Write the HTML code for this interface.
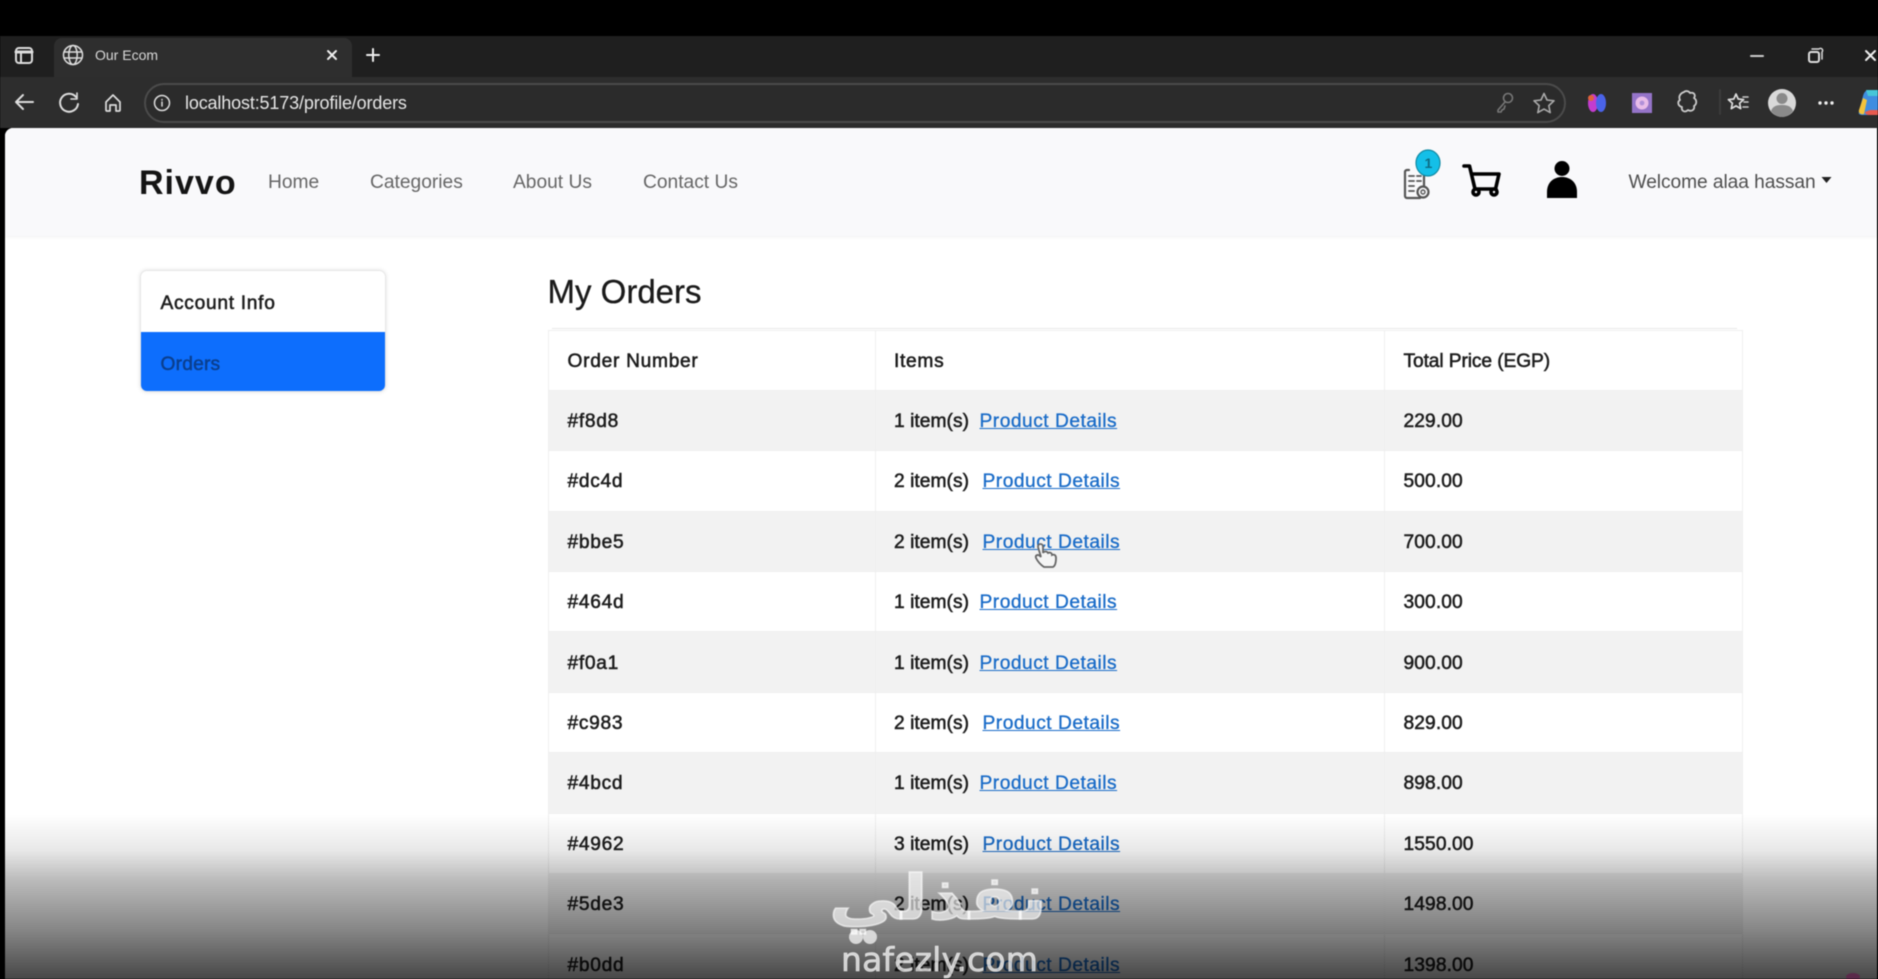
<!DOCTYPE html>
<html lang="en"><head><meta charset="utf-8"><title>Our Ecom</title>
<style>
*{box-sizing:border-box;margin:0;padding:0}
html,body{width:1878px;height:979px;overflow:hidden;background:#000;font-family:"Liberation Sans",sans-serif}
#root{position:absolute;left:0;top:0;width:1878px;height:979px;overflow:hidden;filter:blur(.45px)}
.a{position:absolute;white-space:nowrap}
.ts{top:36px;left:0;width:1878px;height:41px;background:#1f1f1f}
.tab{left:54px;top:38px;width:298px;height:39px;background:#2e2e2e;border-radius:8px 8px 0 0}
.tb{left:0;top:77px;width:1878px;height:51px;background:#2d2d2d}
.addr{left:144px;top:83px;width:1422px;height:40px;border:2px solid #4b4b4b;border-radius:20px;background:#2b2b2b}
.page{left:5px;top:128px;width:1872px;height:851px;background:#fff;border-radius:8px 0 0 0;overflow:hidden}
.nav{left:5px;top:128px;width:1872px;height:108px;background:#f9f9fb;border-radius:8px 0 0 0;box-shadow:0 1px 3px rgba(0,0,0,.06)}
.t{font-size:19.2px;line-height:24px;letter-spacing:.7px;color:#1d1d1d;-webkit-text-stroke:.55px #1d1d1d}
.nl{font-size:19.2px;line-height:24px;color:#666;top:171px}
.side{left:140px;top:270px;width:246px;height:122px;border-radius:7px;border:1px solid #e8e8e8;box-shadow:0 0 4px rgba(0,0,0,.12);background:#fff;overflow:hidden}
.side div{position:absolute;left:0;top:61px;width:246px;height:61px;background:#0d6efd}
table{position:absolute;left:548px;top:329.5px;width:1194px;border-collapse:collapse;table-layout:fixed}
td,th{height:60.4px;padding:3px 0 0 18.5px;text-align:left;font-size:19.2px;font-weight:400;letter-spacing:.7px;color:#1d1d1d;-webkit-text-stroke:.55px #1d1d1d;border:1px solid #efefef;white-space:nowrap;overflow:hidden}
tbody tr:nth-child(odd) td{background:#f2f2f2}
td a{color:#1a6cc8;-webkit-text-stroke:.35px #1a6cc8;text-decoration:underline;letter-spacing:.5px}
td span{display:inline-block;letter-spacing:.05px}
.s1{width:85.5px}.s2{width:88.5px}
.p{letter-spacing:.1px}
th.p{letter-spacing:-.1px}
.grad{left:0;top:800px;width:1878px;height:179px;background:linear-gradient(to bottom,rgba(0,0,0,0) 0,rgba(0,0,0,0) 8%,rgba(0,0,0,.09) 28%,rgba(0,0,0,.27) 45%,rgba(0,0,0,.47) 72%,rgba(0,0,0,.72) 100%)}
svg{position:absolute;overflow:visible}
</style></head><body><div id="root">
<div class="a ts"></div>
<div class="a tab"></div>
<div class="a tb"></div>
<div class="a addr"></div>

<svg style="left:0;top:0" width="1878" height="128" fill="none" stroke="#ddd" stroke-width="2" stroke-linecap="round" stroke-linejoin="round">
<rect x="16" y="48" width="16" height="15" rx="3"/><path d="M16 52h16" stroke-width="3"/><path d="M21 52v11"/>
<circle cx="73" cy="55" r="9.5" stroke-width="1.5"/><ellipse cx="73" cy="55" rx="4.2" ry="9.5" stroke-width="1.5"/><path d="M64 52h18M64 58h18" stroke-width="1.5"/>
<path d="M328 51l8 8M336 51l-8 8" stroke="#eee"/>
<path d="M373 49v12M367 55h12" stroke="#eee"/>
<path d="M1751 56h12" stroke="#ccc"/>
<rect x="1809" y="52" width="10" height="10" rx="2"/><path d="M1812 49h7a2 2 0 0 1 3 3v7" stroke-width="1.5"/>
<path d="M1866 51l9 9M1875 51l-9 9" stroke="#eee"/>
<path d="M33 102H16M23 95l-7 7 7 7"/>
<path d="M76 97a9 9 0 1 0 2 7"/><path d="M77 93v6h-6" stroke-width="1.6"/>
<path d="M106 102l7-7 7 7v8a1 1 0 0 1-1 1h-3v-6h-6v6h-3a1 1 0 0 1-1-1z" stroke-width="1.7"/>
<circle cx="162" cy="103" r="7.5" stroke-width="1.5"/><path d="M162 102v4M162 99.5v.4" stroke-width="1.5"/>
<g stroke="#777" stroke-width="1.6"><circle cx="1508" cy="98" r="4.5"/><path d="M1505 102l-7 8v2h3l1-2 2-1 1-3"/></g>
<path d="M1544 93.500l3 6.500 7 .8-5.200 4.800 1.400 7-6.200-3.500-6.200 3.500 1.400-7-5.200-4.800 7-.8z" stroke="#aaa" stroke-width="1.6"/>
<path d="M1684 92a4 4 0 0 1 6 1c4-1 6 2 4 5 3 2 3 6 0 8 1 4-3 6-6 4-3 3-7 1-6-3-4-1-5-5-2-7-2-4 1-7 4-8z" stroke="#ccc" stroke-width="1.8"/>
<path d="M1736 94l2.200 5 5.400.6-4 3.600 1.100 5.400-4.700-2.700-4.700 2.700 1.100-5.400-4-3.600 5.400-.6z" stroke="#ddd" stroke-width="1.7"/><path d="M1743 97h5M1744 102h4M1743 107h5" stroke="#ccc" stroke-width="1.6"/>
<path d="M1720 90v24" stroke="#3b3b3b"/>
<g stroke="none">
<ellipse cx="1593" cy="103" rx="5" ry="9" fill="#c33ccf"/><ellipse cx="1601" cy="103" rx="5" ry="9" fill="#4a63e8"/><circle cx="1591" cy="98" r="3" fill="#e0623c"/>
<rect x="1632" y="93" width="20" height="20" fill="#9574c8"/><circle cx="1642" cy="103" r="6.500" fill="#e8bce8"/><circle cx="1642" cy="103" r="2.400" fill="#b090d8"/>
<circle cx="1782" cy="103" r="14" fill="#d9d9d9"/><circle cx="1782" cy="98.500" r="5.500" fill="#8a8a8a"/><path d="M1771 111c2-5 6-6 11-6s9 1 11 6c-3 4-7 6-11 6s-8-2-11-6z" fill="#8a8a8a"/>
<circle cx="1820" cy="103" r="1.700" fill="#eee"/><circle cx="1826" cy="103" r="1.700" fill="#eee"/><circle cx="1832" cy="103" r="1.700" fill="#eee"/>
<path d="M1859 112l4-16c1-4 3-6 6-6h9v18c0 4-3 7-6 7h-9c-3 0-5-1-4-3z" fill="#3f8de0"/><path d="M1859 110l4-12 4 2-3 14c-3 1-6-1-5-4z" fill="#f3c33c"/><path d="M1870 110h8v5h-8c-3 0-5-1-5-3z" fill="#e85a4f"/><path d="M1866 90h12v6h-10z" fill="#46c6d8"/>
</g>
</svg>

<div class="a" style="left:95px;top:46px;font-size:14px;line-height:18px;color:#d8d8d8">Our Ecom</div>
<div class="a" style="left:185px;top:92px;font-size:18px;line-height:22px;letter-spacing:-.15px;color:#e6e6e6">localhost:5173/profile/orders</div>

<div class="a page"></div>
<div class="a nav"></div>
<div class="a" style="left:139px;top:163px;font-size:34px;line-height:40px;font-weight:700;letter-spacing:1px;color:#141414">Rivvo</div>
<div class="a nl" style="left:268px">Home</div>
<div class="a nl" style="left:370px">Categories</div>
<div class="a nl" style="left:513px">About Us</div>
<div class="a nl" style="left:643px">Contact Us</div>
<div class="a" style="left:1628.500px;top:171px;font-size:19.200px;line-height:24px;letter-spacing:-.07px;color:#4e4e4e">Welcome alaa hassan</div>

<svg style="left:0;top:0" width="1878" height="240" fill="none" stroke-linecap="round" stroke-linejoin="round">
<path d="M1821.500 177h10l-5 6z" fill="#222"/>
<g stroke="#555" stroke-width="2.200">
<path d="M1409 170h-2a2 2 0 0 0-2 2v24a2 2 0 0 0 2 2h13"/><path d="M1424 172v14"/>
<path d="M1409 176h5M1409 181h5M1409 186h5M1409 191h5M1417 176h4M1417 181h4" stroke-width="1.800"/>
<circle cx="1423" cy="192" r="5.500"/><circle cx="1423" cy="192" r="2" stroke-width="1.400"/>
</g>
<ellipse cx="1428" cy="163" rx="12" ry="13" fill="#14bfe8" stroke="#128aa3" stroke-width="1.200"/>
<g stroke="#000" stroke-width="3.600">
<path d="M1464 166h5.500l5.500 23h21"/><path d="M1472 174h27l-3 13"/>
<circle cx="1476" cy="192" r="3"/><circle cx="1494" cy="192" r="3"/>
</g>
<circle cx="1562" cy="168.500" r="7.500" fill="#000"/>
<path d="M1547 198v-6c0-10 7-15 15-15s15 5 15 15v6z" fill="#000"/>
</svg>
<div class="a" style="left:1424.500px;top:155px;font-size:14px;line-height:16px;font-weight:700;color:#0e6d85">1</div>

<div class="a side"><div></div></div>
<div class="a t" style="left:160.500px;top:291.500px">Account Info</div>
<div class="a t" style="left:160.500px;top:353px;letter-spacing:.2px;color:#0b3f8e;-webkit-text-stroke:.5px #0b3f8e">Orders</div>

<div class="a" style="left:547.500px;top:272px;font-size:33px;line-height:40px;color:#1a1a1a;-webkit-text-stroke:.3px #1a1a1a">My Orders</div>
<div class="a" style="left:552px;top:328px;width:1185px;height:1px;background:#e8e8e8"></div>

<table>
<colgroup><col style="width:326.500px"><col style="width:509.500px"><col style="width:358px"></colgroup>
<thead><tr><th>Order Number</th><th>Items</th><th class="p">Total Price (EGP)</th></tr></thead>
<tbody>
<tr><td>#f8d8</td><td><span class="s1">1 item(s)</span><a>Product Details</a></td><td class="p">229.00</td></tr>
<tr><td>#dc4d</td><td><span class="s2">2 item(s)</span><a>Product Details</a></td><td class="p">500.00</td></tr>
<tr><td>#bbe5</td><td><span class="s2">2 item(s)</span><a>Product Details</a></td><td class="p">700.00</td></tr>
<tr><td>#464d</td><td><span class="s1">1 item(s)</span><a>Product Details</a></td><td class="p">300.00</td></tr>
<tr><td>#f0a1</td><td><span class="s1">1 item(s)</span><a>Product Details</a></td><td class="p">900.00</td></tr>
<tr><td>#c983</td><td><span class="s2">2 item(s)</span><a>Product Details</a></td><td class="p">829.00</td></tr>
<tr><td>#4bcd</td><td><span class="s1">1 item(s)</span><a>Product Details</a></td><td class="p">898.00</td></tr>
<tr><td>#4962</td><td><span class="s2">3 item(s)</span><a>Product Details</a></td><td class="p">1550.00</td></tr>
<tr><td>#5de3</td><td><span class="s2">2 item(s)</span><a>Product Details</a></td><td class="p">1498.00</td></tr>
<tr><td>#b0dd</td><td><span class="s2">2 item(s)</span><a>Product Details</a></td><td class="p">1398.00</td></tr>
</tbody></table>

<svg style="left:0;top:0" width="1878" height="979">
<path d="M1038 547c0-4 5-4 5 0v6c1-2 4-2 5 0 2-1 4 0 4 2 2-1 4 0 4 3 0 5-1 8-3 9h-9c-3-2-6-5-8-9-1-3 2-4 4-2l1 1z" fill="#f5f5f5" stroke="#666" stroke-width="1.800"/>
</svg>

<div class="a grad"></div>
<svg style="left:0;top:0" width="1878" height="979"><ellipse cx="1853" cy="977" rx="7" ry="4" fill="#5a2a4a"/>
<circle cx="856" cy="937" r="7" fill="#fff" fill-opacity=".7"/><circle cx="870" cy="937" r="7" fill="#fff" fill-opacity=".7"/></svg>

<div class="a" style="left:834px;top:858px;width:208px;height:80px;line-height:80px;text-align:center;font-family:'DejaVu Sans',sans-serif;font-weight:700;font-size:62px;color:rgba(255,255,255,.62);-webkit-text-stroke:1.500px rgba(255,255,255,.62);transform:scaleX(1.15);direction:rtl">نفذلي</div>
<div class="a" style="left:841px;top:941px;font-family:'DejaVu Sans',sans-serif;font-weight:400;font-size:33px;line-height:38px;letter-spacing:.15px;color:rgba(255,255,255,.72);-webkit-text-stroke:.6px rgba(255,255,255,.72)">nafezly.com</div>
</div></body></html>
